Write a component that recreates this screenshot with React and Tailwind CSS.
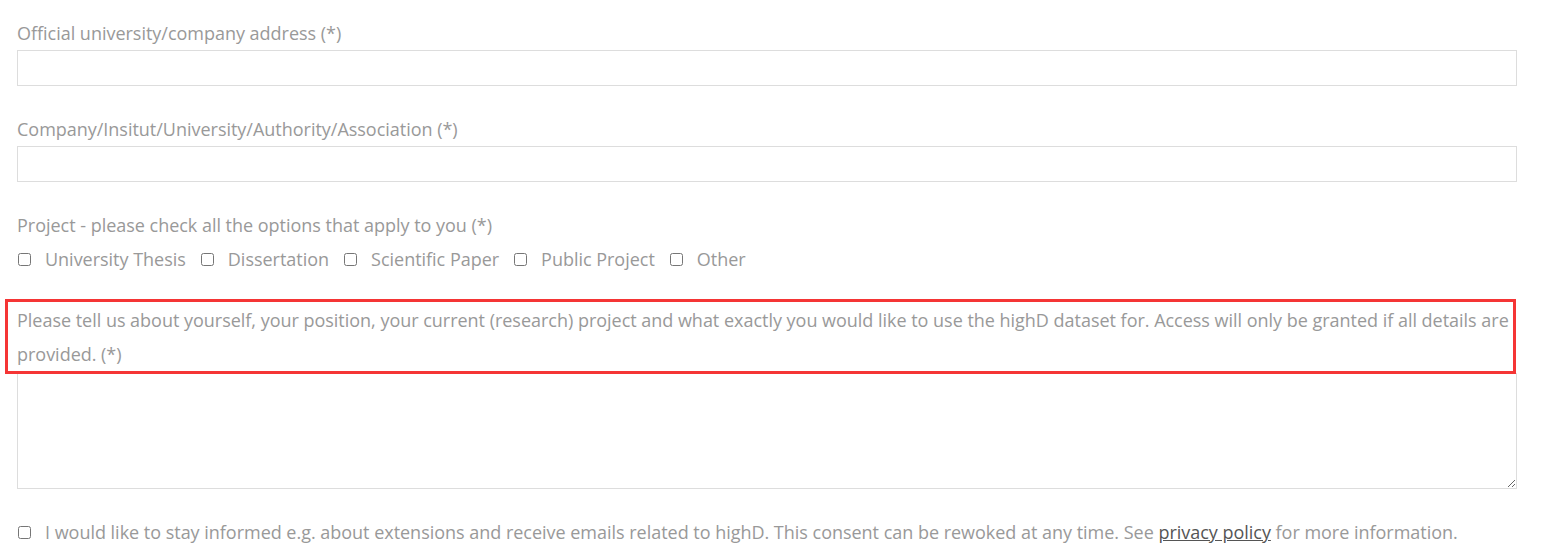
import React from "react";

function Check({ label }) {
  return (
    <label className="flex items-center">
      <input type="checkbox" className="ml-[1px] mr-[14px] h-[13px] w-[13px]" />
      <span>{label}</span>
    </label>
  );
}

export default function App() {
  return (
    <div className="bg-white pt-[16px] px-[17px] text-[18px] leading-[34px] tracking-[-0.02px] text-[#999999] font-['Open_Sans',sans-serif]">
      <div className="w-[1500px]">
        <label className="block">Official university/company address (*)</label>
        <input type="text" className="block h-[36px] w-[1500px] border border-[#dddddd] outline-none" />

        <label className="mt-[26px] block">Company/Insitut/University/Authority/Association (*)</label>
        <input type="text" className="block h-[36px] w-[1500px] border border-[#dddddd] outline-none" />

        <div className="mt-[26px]">Project - please check all the options that apply to you (*)</div>
        <div className="flex items-center gap-[14px]">
          <Check label="University Thesis" />
          <Check label="Dissertation" />
          <Check label="Scientific Paper" />
          <Check label="Public Project" />
          <Check label="Other" />
        </div>

        <div className="relative z-10 mt-[23px] ml-[-12px] w-[1511px] border-[3px] border-[#f53535] pl-[9px] pt-[1px]">
          <label className="block w-[1500px]">
            Please tell us about yourself, your position, your current (research) project and what exactly you would like to use the highD dataset for. Access will only be granted if all details are provided. (*)
          </label>
        </div>
        <textarea className="-mt-px block h-[116px] w-[1500px] border border-[#dddddd] outline-none" />

        <div className="mt-[26px] flex items-center">
          <input type="checkbox" className="ml-[1px] mr-[14px] h-[13px] w-[13px]" />
          <span>
            I would like to stay informed e.g. about extensions and receive emails related to highD. This consent can be rewoked at any time. See{" "}
            <a href="#" className="text-[#555555] underline">privacy policy</a> for more information.
          </span>
        </div>
      </div>
    </div>
  );
}
